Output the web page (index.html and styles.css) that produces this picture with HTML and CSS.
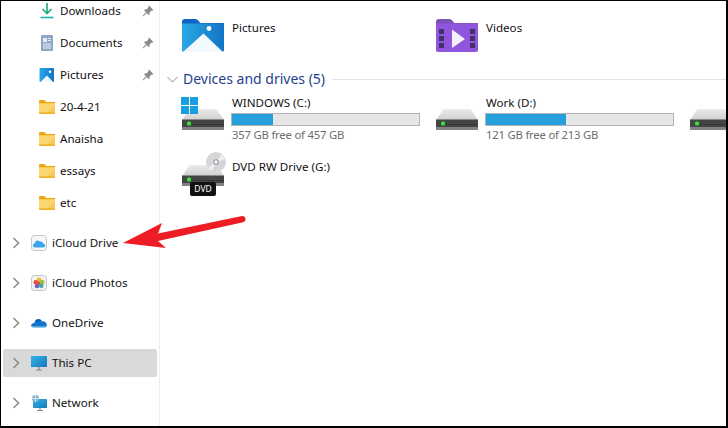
FILE: index.html
```html
<!DOCTYPE html>
<html lang="en">
<head>
<meta charset="utf-8">
<title>This PC</title>
<link rel="stylesheet" href="styles.css">
</head>
<body>
<svg class="defs" width="0" height="0" aria-hidden="true">
  <defs>
    <linearGradient id="blueBody" x1="0" y1="0" x2="1" y2="0"><stop offset="0" stop-color="#2aa8e4"/><stop offset="1" stop-color="#1274c6"/></linearGradient>
    <linearGradient id="diskTop" x1="0" y1="0" x2="0" y2="1"><stop offset="0" stop-color="#ececea"/><stop offset="1" stop-color="#cfd0cd"/></linearGradient>
    <linearGradient id="screen" x1="0" y1="0" x2="1" y2="1"><stop offset="0" stop-color="#35b4e6"/><stop offset="1" stop-color="#1479bf"/></linearGradient>
    <symbol id="folder" viewBox="0 0 16 14">
      <path d="M0 1.500C0 .7.500 0 1.200 0h3.600c.6 0 1 .4 1.400.8L7.200 2H16v2H0z" fill="#eaa718"/>
      <path d="M0 3.200h16v9.600c0 .6-.4 1-1 1H1c-.6 0-1-.4-1-1z" fill="#fdd56f"/>
      <path d="M7 13.800 16 5v7.800c0 .6-.4 1-1 1z" fill="#fbcb57"/>
      <path d="M0 12.600h16v.4c0 .5-.4.8-1 .8H1c-.6 0-1-.3-1-.8z" fill="#e9a512"/>
    </symbol>
    <symbol id="pin" viewBox="0 0 12 12">
      <path d="M7 .6 11.400 5l-1 .8-.8-.3-2.200 2.200c.3 1 .1 1.800-.5 2.500L4.700 8.100 1.200 11.400.6 10.800l3.300-3.500L1.800 5.100c.7-.6 1.500-.8 2.500-.5l2.200-2.200-.3-.8z" fill="#8a8a8a"/>
    </symbol>
    <symbol id="chev" viewBox="0 0 8 12">
      <path d="M1.500 1 6.500 6l-5 5" fill="none" stroke="#8c8c8c" stroke-width="1.600"/>
    </symbol>
    <symbol id="disk" viewBox="0 0 42 21">
      <path d="M0 11 7.500 0h27L42 11z" fill="url(#diskTop)"/>
      <path d="M0 10.500h42V20c0 .7-.4 1-1 1H1c-.6 0-1-.3-1-1z" fill="#454544"/>
      <path d="M0 18h42v2c0 .7-.4 1-1 1H1c-.6 0-1-.3-1-1z" fill="#828280"/>
      <path d="M10 15.500h31" stroke="#292928" stroke-dasharray="1 1"/>
      <rect x="5" y="12.500" width="4" height="4" rx="1.500" fill="#2fe838"/>
    </symbol>
  </defs>
</svg>

<div class="window">
  <nav class="sidebar">
    <ul class="quick">
      <li class="nav-row">
        <svg class="nav-icon" viewBox="0 0 16 16"><path d="M8 0v10M3.500 6 8 10.500 12.500 6" fill="none" stroke="#1fa87c" stroke-width="1.600"/><path d="M1.500 14.500h13" stroke="#1fb5a0" stroke-width="1.600"/></svg>
        <span class="nav-label">Downloads</span>
        <svg class="pin"><use href="#pin"/></svg>
      </li>
      <li class="nav-row">
        <svg class="nav-icon" viewBox="0 0 16 16"><rect x="2" width="12" height="16" rx="1" fill="#8fa6c4"/><path d="M4 3h4v4H4z" fill="#e8eef6"/><path d="M9 3.500h3M9 5.500h3M4 9h8M4 11h8M4 13h8" stroke="#e8eef6"/></svg>
        <span class="nav-label">Documents</span>
        <svg class="pin"><use href="#pin"/></svg>
      </li>
      <li class="nav-row">
        <svg class="nav-icon" viewBox="0 0 16 16"><rect x=".5" y="1" width="14.500" height="14" rx="1" fill="url(#blueBody)"/><path d="M1.500 15 8 8.500 14 15z" fill="#f2f8fd"/><circle cx="11" cy="4.800" r="1.300" fill="#fff"/></svg>
        <span class="nav-label">Pictures</span>
        <svg class="pin"><use href="#pin"/></svg>
      </li>
      <li class="nav-row"><svg class="nav-icon folder"><use href="#folder"/></svg><span class="nav-label">20-4-21</span></li>
      <li class="nav-row"><svg class="nav-icon folder"><use href="#folder"/></svg><span class="nav-label">Anaisha</span></li>
      <li class="nav-row"><svg class="nav-icon folder"><use href="#folder"/></svg><span class="nav-label">essays</span></li>
      <li class="nav-row"><svg class="nav-icon folder"><use href="#folder"/></svg><span class="nav-label">etc</span></li>
    </ul>
    <ul class="roots">
      <li class="root-row">
        <svg class="chev"><use href="#chev"/></svg>
        <svg class="root-icon" viewBox="0 0 16 16"><rect x=".5" y=".5" width="15" height="15" rx="3" fill="#f5f8fb" stroke="#c4c4c4"/><path d="M3.800 12.500C1.600 12.500 1.200 9.300 3.400 8.800 3.700 6 6.800 4.500 8.800 6.600 10.500 6 12.100 7.200 12.300 8.800 14.700 8.900 14.900 12.500 12.200 12.500z" fill="#3ba3ee"/></svg>
        <span class="nav-label">iCloud Drive</span>
      </li>
      <li class="root-row">
        <svg class="chev"><use href="#chev"/></svg>
        <svg class="root-icon" viewBox="0 0 16 16"><rect x=".5" y=".5" width="15" height="15" rx="3" fill="#f2f2f2" stroke="#c4c4c4"/><circle cx="8" cy="4.800" r="2.300" fill="#f5b62a"/><circle cx="11.200" cy="7" r="2.300" fill="#8cc63f"/><circle cx="10.300" cy="10.800" r="2.300" fill="#3fa9a0"/><circle cx="6" cy="11" r="2.300" fill="#6b62c9"/><circle cx="4.800" cy="7.200" r="2.300" fill="#e8483f"/><circle cx="8" cy="8" r="1.500" fill="#c9503f"/></svg>
        <span class="nav-label">iCloud Photos</span>
      </li>
      <li class="root-row">
        <svg class="chev"><use href="#chev"/></svg>
        <svg class="root-icon" viewBox="0 0 16 16"><path d="M3.500 8c.2-2.500 1.700-4 4-4 1.500 0 2.800.7 3.300 2C10 7 7 7.500 3.500 8z" fill="#0a5fb4"/><path d="M.3 11.500C-.3 10 .7 8.400 2.500 8.300 5 6.500 8 6 11 6.200c2.500-.3 4.800 1.400 4.800 3.800 0 .6-.1 1-.3 1.500z" fill="#1273cf"/><path d="M.8 11.500c.3.600.8 1 1.400 1h11.600c.7 0 1.300-.4 1.600-1z" fill="#1490df"/></svg>
        <span class="nav-label">OneDrive</span>
      </li>
      <li class="root-row selected">
        <svg class="chev"><use href="#chev"/></svg>
        <svg class="root-icon" viewBox="0 0 16 16"><rect y="1" width="16" height="11" rx=".6" fill="url(#screen)"/><path d="M8 12v2.500M5 15h6" stroke="#7c8b96" stroke-width="1.200"/></svg>
        <span class="nav-label">This PC</span>
      </li>
      <li class="root-row">
        <svg class="chev"><use href="#chev"/></svg>
        <svg class="root-icon" viewBox="0 0 16 16"><rect x="2" y="4" width="14" height="9" rx=".6" fill="url(#screen)"/><path d="M9 13v2M6 15.500h6" stroke="#7c8b96" stroke-width="1.200"/><circle cx="4.500" cy="3.500" r="3.500" fill="#7fb0cc"/><path d="M1 3.500h7M4.500 0v7" stroke="#e6f1f7" stroke-width=".8"/></svg>
        <span class="nav-label">Network</span>
      </li>
    </ul>
  </nav>

  <main class="content">
    <section class="folders">
      <div class="tile">
        <svg class="tile-icon" viewBox="0 0 42 33"><path d="M0 3C0 1 1 0 3 0h10c2 0 3 1 4.500 3l1 1H42v6H0z" fill="#0d67c2"/><path d="M0 4.500h41c.6 0 1 .4 1 1V31c0 1.200-.8 2-2 2H2c-1.200 0-2-.8-2-2z" fill="url(#blueBody)"/><path d="M1 33 21.500 14.500 41 33z" fill="#f2fafe"/><circle cx="27" cy="9.500" r="2.400" fill="#fff"/></svg>
        <span class="tile-name">Pictures</span>
      </div>
      <div class="tile">
        <svg class="tile-icon" viewBox="0 0 42 33"><path d="M0 3C0 1 1 0 3 0h10c2 0 3 1 4.500 3l1 1H42v6H0z" fill="#7a52b8"/><path d="M0 4.500h41c.6 0 1 .4 1 1V31c0 1.200-.8 2-2 2H2c-1.200 0-2-.8-2-2z" fill="#8f55dc"/><path d="M3 10h5v5H3zM3 17h5v5H3zM3 24h5v5H3zM34 10h5v5h-5zM34 17h5v5h-5zM34 24h5v5h-5z" fill="#453066"/><path d="M16 10.500 29 20 16 29z" fill="#f4effb"/></svg>
        <span class="tile-name">Videos</span>
      </div>
    </section>

    <header class="group-head">
      <svg class="group-chev" viewBox="0 0 11 7"><path d="M.5 1 5.500 6l5-5" fill="none" stroke="#8e8e8e"/></svg>
      <h2 class="group-title">Devices and drives (5)</h2>
      <span class="group-rule"></span>
    </header>

    <section class="drives">
      <div class="drive">
        <div class="drive-art">
          <svg class="disk"><use href="#disk"/></svg>
          <svg class="win-logo" viewBox="0 0 17 17"><path d="M0 0h8v8H0zM9 0h8v8H9zM0 9h8v8H0zM9 9h8v8H9z" fill="#1a9ee2"/></svg>
        </div>
        <div class="drive-info">
          <span class="drive-name">WINDOWS (C:)</span>
          <div class="bar"><div class="bar-fill" style="width:22%"></div></div>
          <span class="drive-free">357 GB free of 457 GB</span>
        </div>
      </div>
      <div class="drive">
        <div class="drive-art"><svg class="disk"><use href="#disk"/></svg></div>
        <div class="drive-info">
          <span class="drive-name">Work (D:)</span>
          <div class="bar"><div class="bar-fill" style="width:43%"></div></div>
          <span class="drive-free">121 GB free of 213 GB</span>
        </div>
      </div>
      <div class="drive">
        <div class="drive-art"><svg class="disk"><use href="#disk"/></svg></div>
      </div>
      <div class="drive dvd">
        <div class="drive-art">
          <svg class="disk"><use href="#disk"/></svg>
          <svg class="disc" viewBox="0 0 20 20"><circle cx="10" cy="10" r="10" fill="#d6d7d9"/><path d="M10 10 16 2 19 7z" fill="#eef0f2"/><path d="M10 10 2 16 6 19z" fill="#eef0f2"/><circle cx="10" cy="10" r="3" fill="#a9abae"/><circle cx="10" cy="10" r="1.400" fill="#fff"/></svg>
          <span class="dvd-badge">DVD</span>
        </div>
        <div class="drive-info">
          <span class="drive-name">DVD RW Drive (G:)</span>
        </div>
      </div>
    </section>
  </main>

  <svg class="arrow" viewBox="0 0 728 428"><path d="M123 243 162 223 158 233.500 242 216Q245.500 216 245.500 219 245.500 222 242 222.500L158 241 166 248z" fill="#ee1c25"/></svg>
</div>
</body>
</html>
```
FILE: styles.css
```css
* { box-sizing: border-box; }
html, body { margin: 0; height: 100%; }
body { font-family: "Noto Sans", "Open Sans", sans-serif; font-size: 11.6px; color: #111; background: #fff; overflow: hidden; }
.defs { position: absolute; }
ul { list-style: none; margin: 0; padding: 0; }

.window {
  position: relative;
  display: flex;
  width: 728px;
  height: 428px;
  border: 1px solid #000;
  border-width: 1px 2px 2px 1px;
  overflow: hidden;
}

.sidebar {
  flex: none;
  width: 159px;
  height: 100%;
  border-right: 1px solid #eeeeee;
  padding-left: 2px;
  padding-right: 2px;
}

.quick { margin-top: -6px; }
.nav-row {
  display: flex;
  align-items: center;
  height: 32px;
  padding-left: 36px;
}
.nav-icon { flex: none; width: 16px; height: 16px; margin-right: 5px; }
.nav-icon.folder { height: 14px; }
.nav-label { line-height: 16px; white-space: nowrap; }
.pin { width: 12px; height: 12px; margin-left: auto; margin-right: 3px; }

.roots { margin-top: 4px; }
.root-row {
  display: flex;
  align-items: center;
  height: 40px;
  padding-left: 9px;
  position: relative;
}
.chev { width: 8px; height: 12px; flex: none; margin-right: 11px; }
.root-icon { width: 16px; height: 16px; flex: none; margin-right: 5px; }
.selected::before {
  content: "";
  position: absolute;
  left: 0; right: 0; top: 6px; bottom: 6px;
  background: #d9d9d9;
  border-radius: 2px;
  z-index: -1;
}

.content { flex: 1; min-width: 0; padding: 18px 0 0 7px; overflow: hidden; }

.folders { display: flex; padding-left: 15px; height: 33px; }
.tile { width: 254px; flex: none; display: flex; align-items: flex-start; }
.tile-icon { width: 42px; height: 33px; flex: none; margin-right: 8px; }
.tile-name { line-height: 16px; margin-top: 1px; }

.group-head { display: flex; align-items: center; height: 20px; margin-top: 17px; }
.group-chev { width: 11px; height: 7px; flex: none; margin-right: 5px; }
.group-title { margin: 0; font-size: 14px; font-weight: 400; color: #1f3f8f; white-space: nowrap; line-height: 20px; }
.group-rule { flex: 1; height: 1px; background: #e2e2e2; margin-left: 7px; }

.drives {
  display: grid;
  grid-template-columns: repeat(3, 254px);
  grid-auto-rows: 56px;
  padding-left: 15px;
  margin-top: 6px;
}
.drive { display: flex; align-items: flex-start; }
.drive-art { position: relative; flex: none; width: 42px; height: 42px; margin: 2px 7px 0 0; }
.disk { position: absolute; left: 0; top: 12px; width: 42px; height: 21px; }
.win-logo { position: absolute; left: -1px; top: 0; width: 17px; height: 17px; }
.disc { position: absolute; left: 24px; top: -1px; width: 20px; height: 20px; }
.dvd-badge {
  position: absolute;
  left: 8px; top: 29px;
  width: 26px; height: 14px;
  background: #111;
  border-radius: 2px;
  color: #fff;
  font-size: 8.500px;
  line-height: 14px;
  text-align: center;
}
.drive-info { display: flex; flex-direction: column; width: 189px; }
.drive-name { line-height: 16px; margin-left: 1px; white-space: nowrap; }
.bar { height: 13px; margin-top: 2px; background: #e6e6e6; border: 1px solid #b4b4b4; }
.bar-fill { height: 100%; background: #26a0da; }
.drive-free { line-height: 16px; margin: 1px 0 0 1px; font-size: 11.300px; letter-spacing: -0.2px; color: #6d6d6d; white-space: nowrap; }
.dvd .drive-info { margin-top: 8px; }

.arrow { position: absolute; left: -1px; top: -1px; width: 728px; height: 428px; pointer-events: none; }
```
